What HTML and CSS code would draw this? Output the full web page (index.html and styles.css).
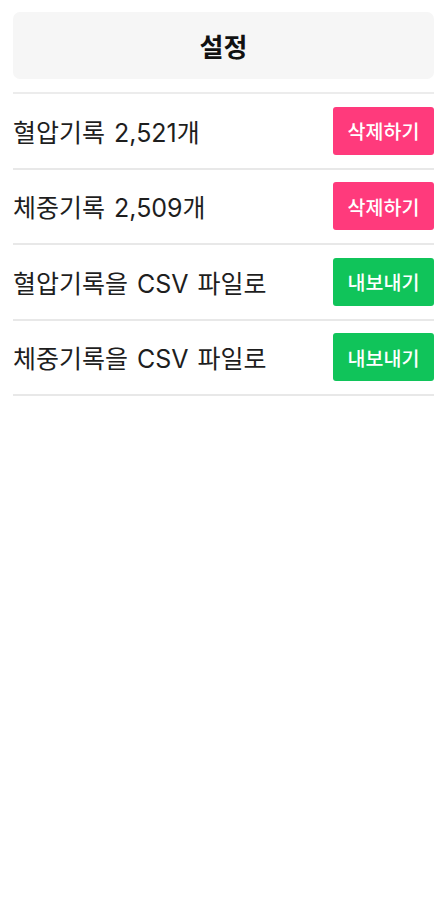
FILE: index.html
```html
<!DOCTYPE html>
<html lang="ko">
<head>
<meta charset="utf-8">
<link rel="stylesheet" href="styles.css">
</head>
<body>
<div class="page">
  <header class="header"><h1 class="title">설정</h1></header>
  <ul class="list">
    <li class="row"><span class="label">혈압기록 2,521개</span><button class="btn btn-del">삭제하기</button></li>
    <li class="row"><span class="label">체중기록 2,509개</span><button class="btn btn-del">삭제하기</button></li>
    <li class="row"><span class="label">혈압기록을 CSV 파일로</span><button class="btn btn-exp">내보내기</button></li>
    <li class="row"><span class="label">체중기록을 CSV 파일로</span><button class="btn btn-exp">내보내기</button></li>
  </ul>
</div>
</body>
</html>
```
FILE: styles.css
```css
* { box-sizing: border-box; }
html, body { margin: 0; padding: 0; background: #fff; }
body { font-family: Inter, "Noto Sans CJK KR", sans-serif; color: #1e1e1e; }
.page { padding: 12px 12px 0 13px; }
.header {
  height: 67px;
  background: #f6f6f6;
  border-radius: 7px;
  display: flex;
  align-items: center;
  justify-content: center;
}
.title { margin: 0; font-size: 26px; font-weight: 700; color: #111; line-height: 1; font-family: "Noto Sans CJK KR", sans-serif; }
.list {
  list-style: none;
  margin: 13px 0 0;
  padding: 0;
  border-top: 2px solid #ececec;
}
.row {
  height: 75.5px;
  display: flex;
  align-items: center;
  justify-content: space-between;
  border-bottom: 2px solid #e8e8e8;
}
.label { font-size: 25px; color: #1e1e1e; font-weight: 400; word-spacing: 2px; }
.btn {
  width: 101px;
  height: 48px;
  border: none;
  border-radius: 3px;
  color: #fff;
  font-family: "Noto Sans CJK KR", sans-serif;
  font-size: 19.5px;
  font-weight: 500;
  padding: 0;
}
.btn-del { background: #ff3a7c; }
.btn-exp { background: #10c45a; }
```
